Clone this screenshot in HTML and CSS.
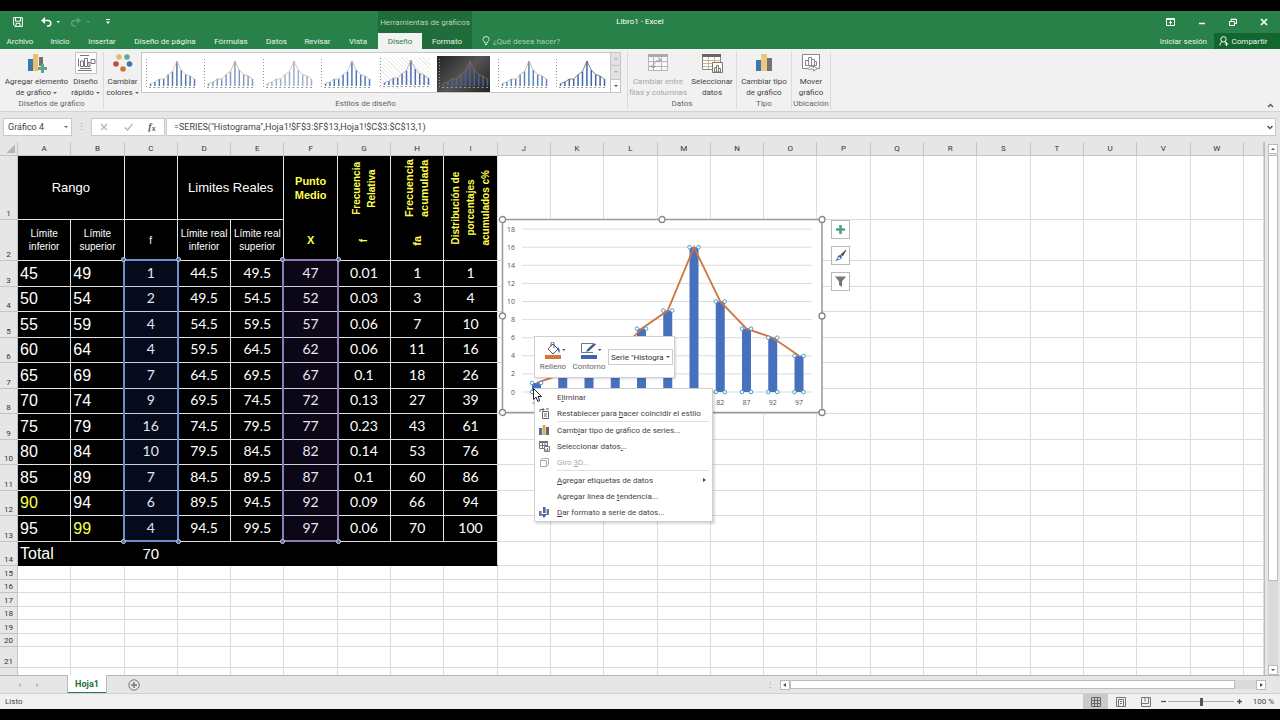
FILE: index.html
```html
<!DOCTYPE html>
<html lang="es">
<head>
<meta charset="utf-8">
<title>Libro1 - Excel</title>
<link rel="stylesheet" href="styles.css">
</head>
<body>
<header class="titlebar">
  <div class="quick">
    <button class="qbtn" aria-label="Guardar"><svg width="10" height="10" viewBox="0 0 10 10" fill="none" stroke="#fff"><path d="M.6.6h8.8v8.8H2L.6 8zM2.5.6v3.6h5V.6M3 9.4V6.3h4v3.1"/></svg></button>
    <button class="qbtn undo" aria-label="Deshacer"><svg width="20" height="10" viewBox="0 0 20 10"><path d="M2 3.5h5a2.8 2.8 0 0 1 0 5.6H6" fill="none" stroke="#fff" stroke-width="1.5"/><path d="M0 3.5 4 0v7zM15.500 4h3.500l-1.750 2z" fill="#fff"/></svg></button>
    <button class="qbtn redo" aria-label="Rehacer"><svg width="20" height="10" viewBox="0 0 20 10" opacity=".25"><path d="M7 3.500H3.500a2.800 2.800 0 0 0 0 5.600H5" fill="none" stroke="#fff" stroke-width="1.500"/><path d="M10 3.500 6 0v7zM15.500 4h3.500l-1.750 2z" fill="#fff"/></svg></button>
    <button class="qbtn custom" aria-label="Personalizar"><svg width="6" height="6" viewBox="0 0 6 6"><path d="M1 .5h4" stroke="#fff"/><path d="M1 2.500h4L3 5z" fill="#fff"/></svg></button>
  </div>
  <div class="context-title">Herramientas de gráficos</div>
  <h1 class="doc-title">Libro1 - Excel</h1>
  <div class="window-controls">
    <button aria-label="Opciones de cinta"><svg width="9" height="8" viewBox="0 0 9 8" fill="none" stroke="#fff"><path d="M.5.5h8v7h-8zM.5 1.500h8M4.500 6.500v-4M3 4.500h3"/></svg></button>
    <button aria-label="Minimizar"><svg width="8" height="8" viewBox="0 0 8 8"><path d="M1 5.500h6" stroke="#fff" stroke-width="1.500"/></svg></button>
    <button aria-label="Restaurar"><svg width="8" height="8" viewBox="0 0 8 8" fill="none" stroke="#fff"><path d="M.5 3.500h5v4h-5zM2 3.500v-2h5.500v4H5.500M2 1.200h5.500"/></svg></button>
    <button aria-label="Cerrar"><svg width="8" height="8" viewBox="0 0 8 8"><path d="m1 1 6 6M7 1 1 7" stroke="#fff" stroke-width="1.700"/></svg></button>
  </div>
</header>
<nav class="tabs">
  <button>Archivo</button><button>Inicio</button><button>Insertar</button><button>Diseño de página</button><button>Fórmulas</button><button>Datos</button><button>Revisar</button><button>Vista</button><button class="active">Diseño</button><button class="contextual">Formato</button>
  <button class="tell-me"><svg width="8" height="10" viewBox="0 0 8 10" fill="none" stroke="#cfe6d6"><path d="M2.700 7C2.700 5.500 1 5 1 3.300a3 2.800 0 0 1 6 0C7 5 5.300 5.500 5.300 7zM2.800 8.500h2.400"/></svg>¿Qué desea hacer?</button>
  <button class="signin">Iniciar sesión</button>
  <button class="share"><svg width="10" height="10" viewBox="0 0 10 10" fill="none" stroke="#fff"><circle cx="4.500" cy="3.300" r="2.700"/><path d="M.8 9.500C1 7.500 2 6.300 3.300 5.700M5.800 5.800 7 6.500M7.500 6.200v3.600M5.700 8h3.600"/></svg>Compartir</button>
</nav>

<section class="ribbon" aria-label="Cinta de opciones">
  <div class="group layouts">
    <div class="tools">
      <button class="tool add-element"><svg width="20" height="20" viewBox="0 0 20 20"><path fill="#3f76b4" d="M1 6h5v12H1z"/><path fill="#eac06e" d="M6 1h5v17H6z"/><path fill="#707070" d="M12 4h4v9h-4z"/><path fill="#5fa58c" d="M14 11h3v3h3v3h-3v3h-3v-3h-3v-3h3z"/></svg><span>Agregar elemento<br>de gráfico <i></i></span></button>
      <button class="tool quick-layout"><svg width="22" height="22" viewBox="0 0 22 22" fill="none" stroke="#777"><path fill="#fff" stroke="#c4c4c4" d="M.5.500h21v21H.5z"/><path d="M5 3.500h9M3.500 6.500v8M5 16.500h11M3 18.500h14M16 7.500h4v4h-4zM5.500 9h3v5.500h-3zM9.500 6.500h3v8h-3zM13 10.500h2v4h-2zM3 9.500h1M3 12.500h1"/></svg><span>Diseño<br>rápido <i></i></span></button>
    </div>
    <h2>Diseños de gráfico</h2>
  </div>
  <div class="group styles">
    <div class="tools">
      <button class="tool colors"><svg width="20" height="20" viewBox="0 0 20 20"><circle cx="6" cy="4" r="2.800" fill="#e2b578"/><circle cx="14" cy="4" r="2.800" fill="#6ca793"/><circle cx="3" cy="11" r="2.800" fill="#bc4f35"/><circle cx="16.500" cy="11" r="2.800" fill="#4371a8"/><circle cx="10" cy="16" r="2.800" fill="#cf7434"/></svg><span>Cambiar<br>colores <i></i></span></button>
      <div class="gallery">
        <div class="thumbs" id="thumbs"></div>
        <div class="gallery-nav"><button disabled aria-label="Subir"><i></i></button><button disabled aria-label="Bajar"><i></i></button><button aria-label="Más"><i></i></button></div>
      </div>
    </div>
    <h2>Estilos de diseño</h2>
  </div>
  <div class="group data">
    <div class="tools">
      <button class="tool swap" disabled><svg width="20" height="20" viewBox="0 0 20 20" fill="none" stroke="#b5b5b5"><path fill="#f8f8f8" d="M.5 1.500h19v16H.5z"/><path fill="#aaa" stroke="none" d="M0 1h20v3H0z"/><path d="M.5 8.500h19M.5 13.500h19M5.500 4v14M13.500 4v14"/><path stroke="#999" d="M5 14c1-5 4-7 7-7M10 4.500 13 7l-2.500 2.500M3 12l2 3 3-2"/></svg><span>Cambiar entre<br>filas y columnas</span></button>
      <button class="tool select-data"><svg width="22" height="20" viewBox="0 0 22 20" fill="none"><path fill="#fff" stroke="#888" d="M1.500 1.500h18v15h-18z"/><path fill="#666" d="M1 1h19v3H1z"/><path stroke="#c9b48c" d="M2 7.500h17M2 10.500h17M2 13.500h17M7.500 4v12M13.500 4v12"/><path fill="#fff" stroke="#777" d="M11.500 9.500h10v10h-10zM13.500 14.500h2V19h-2zM15.500 12.500h2V19h-2zM17.500 15.500h2V19h-2z"/></svg><span>Seleccionar<br>datos</span></button>
    </div>
    <h2>Datos</h2>
  </div>
  <div class="group type">
    <div class="tools">
      <button class="tool"><svg width="18" height="20" viewBox="0 0 18 20"><path fill="#3f76b4" d="M1 7h5v11H1z"/><path fill="#eac97e" d="M6 1h6v17H6z"/><path fill="#747474" d="M12 5h5v13h-5z"/></svg><span>Cambiar tipo<br>de gráfico</span></button>
    </div>
    <h2>Tipo</h2>
  </div>
  <div class="group location">
    <div class="tools">
      <button class="tool"><svg width="20" height="20" viewBox="0 0 20 20" fill="none" stroke="#888"><path fill="#fff" d="M1.500 1.500h17v14h-17z"/><path d="M4.500 7.500h3v5h-3zM7.500 4.500h3v8h-3zM10.500 6.500h3v6h-3zM13.500 8.500h2v4h-2z"/><path fill="#fff" d="M7 15.500c2-3 4-2.500 5.500-1V13l4 2.500-4 2.500v-1.500C10 15 9 18 7 15.500z"/></svg><span>Mover<br>gráfico</span></button>
    </div>
    <h2>Ubicación</h2>
  </div>
  <button class="collapse" aria-label="Contraer cinta"><svg width="7" height="5" viewBox="0 0 7 5"><path d="m1 4 2.500-2.500L6 4" fill="none" stroke="#555" stroke-width="1.300"/></svg></button>
</section>

<section class="formula-bar">
  <div class="name-box"><input aria-label="Cuadro de nombres" value="Gráfico 4"><button aria-label="Nombres"><i></i></button></div>
  <span class="grip">⋮</span>
  <div class="fx-buttons">
    <button aria-label="Cancelar"><svg width="8" height="8" viewBox="0 0 8 8"><path d="m1 1 6 6M7 1 1 7" stroke="#b4b4b4" stroke-width="1.200"/></svg></button>
    <button aria-label="Introducir"><svg width="9" height="8" viewBox="0 0 9 8"><path d="m1 4.500 2.500 2.500L8.500 1" fill="none" stroke="#b4b4b4" stroke-width="1.300"/></svg></button>
    <button class="fx">f<small>x</small></button>
  </div>
  <div class="formula"><input aria-label="Barra de fórmulas" value='=SERIES("Histograma",Hoja1!$F$3:$F$13,Hoja1!$C$3:$C$13,1)'><button aria-label="Expandir"><svg width="6" height="5" viewBox="0 0 6 5"><path d="m.5 1 2.500 2.500L5.500 1" fill="none" stroke="#555" stroke-width="1.500"/></svg></button></div>
</section>

<main class="sheet">
  <div class="grid-area">
    <table class="grid" id="grid"></table>
    <div class="chart" id="chart"></div>
    <div class="chart-tools">
      <button aria-label="Elementos de gráfico"><svg width="11" height="11" viewBox="0 0 11 11"><path d="M5.500 1v9M1 5.500h9" stroke="#4da183" stroke-width="2.600"/></svg></button>
      <button aria-label="Estilos de gráfico"><svg width="13" height="13" viewBox="0 0 13 13"><path d="M12 1 7 5.500l1.500 1.500z" fill="#555" stroke="#555"/><path d="M6.500 6 8 7.500C7.500 10.500 5 11.500 1 11.500c2-.8 2-2 2.500-3.500S5.500 6 6.500 6z" fill="#40689b"/><circle cx="5" cy="9.300" r="1.200" fill="#dfe9f4"/></svg></button>
      <button aria-label="Filtros de gráfico"><svg width="13" height="13" viewBox="0 0 13 13"><path d="M1 1.500h11L8 6.500V12L5 10V6.500z" fill="#777"/></svg></button>
    </div>
    <div class="mini-toolbar">
      <button class="mini"><svg width="22" height="18" viewBox="0 0 22 18"><path fill="#d5753a" d="M1 13h16v4H1z"/><path d="m4 7 5-5 5 5-5 5zM7 4V1.500a1.500 1.500 0 0 1 3 0V6" fill="#fff" stroke="#555"/><path d="M13.500 5.500c2 0 2.500 2 2 5.500-1.500-1-2-3-2-5.500z" fill="#3a69a8"/><path d="M18 7h3.500L19.700 9z" fill="#555"/></svg>Relleno</button>
      <button class="mini"><svg width="22" height="18" viewBox="0 0 22 18"><path fill="#3d66ae" d="M1 13h16v4H1z"/><path d="M13 1.500H1.500v9H13" fill="none" stroke="#777"/><path d="m6 10 1.500-3L14 1l2 1.500-7 6.500z" fill="#40618f"/><path d="M18 7h3.500L19.700 9z" fill="#555"/></svg>Contorno</button>
      <span class="series-select"><select aria-label="Elemento de gráfico"><option>Serie "Histogra</option></select></span>
    </div>
    <div class="context-menu" role="menu">
      <button role="menuitem"><span class="ico"></span><span>E<u>l</u>iminar</span></button>
      <button role="menuitem"><span class="ico"><svg width="11" height="11" viewBox="0 0 11 11" fill="none" stroke="#666"><path d="M3.500 3.500h6v7h-6zM5 6h3M5 8h3M1 4V1.500h4M3.500 0 5 1.500 3.500 3M7 1h3"/></svg></span><span>Restablecer para <u>h</u>acer coincidir el estilo</span></button>
      <hr>
      <button role="menuitem"><span class="ico"><svg width="10" height="10" viewBox="0 0 10 10"><path fill="#3f76b4" d="M0 3h3v7H0z"/><path fill="#d9a94f" d="M3.500 0h3v10h-3z"/><path fill="#666" d="M7 2h3v8H7z"/></svg></span><span>Camb<u>i</u>ar tipo de gráfico de series...</span></button>
      <button role="menuitem"><span class="ico"><svg width="11" height="11" viewBox="0 0 11 11" fill="none" stroke="#777"><path fill="#666" stroke="none" d="M0 0h9v2H0z"/><path d="M.5.500h8v7h-8zM.5 4.500h8M3.500 1v6M6 1v6"/><path fill="#fff" d="M5.500 5.500h5v5h-5zM7 10V8M8.500 10V7"/></svg></span><span>Seleccionar datos<u>.</u>..</span></button>
      <button role="menuitem" disabled><span class="ico"><svg width="9" height="9" viewBox="0 0 9 9" fill="none" stroke="#aaa"><path d="M.5 2.500h6v6h-6zM.5 2.500l1.500-2h6.500v6L6.500 8.500"/></svg></span><span>Giro <u>3</u>D...</span></button>
      <hr class="spaced">
      <button role="menuitem"><span class="ico"></span><span><u>A</u>gregar etiquetas de datos</span><i class="submenu"></i></button>
      <button role="menuitem"><span class="ico"></span><span>Agregar línea de <u>t</u>endencia...</span></button>
      <button role="menuitem"><span class="ico"><svg width="10" height="11" viewBox="0 0 10 11"><path fill="#777" d="M0 4h2.500v5H0zM7.500 2H10v6H7.500z"/><path fill="#3a69a8" d="M4 0h2.500v6H4zM2 7h6L5 11z"/></svg></span><span><u>D</u>ar formato a serie de datos...</span></button>
    </div>
    <svg class="cursor" width="9" height="15" viewBox="0 0 9 15"><path d="M.5.500v11l2.500-2.300 1.800 4.300 1.900-.8L5 8.500h3.500z" fill="#fff" stroke="#222"/></svg>
  </div>
  <div class="vscroll"><button aria-label="Subir"><i></i></button><div class="thumb"></div><div class="track"></div><button aria-label="Bajar"><i></i></button></div>
</main>

<section class="sheet-tabs">
  <div class="tab-nav"><button aria-label="Hoja anterior"><i></i></button><button aria-label="Hoja siguiente"><i></i></button></div>
  <button class="sheet-tab">Hoja1</button>
  <button class="new-sheet" aria-label="Hoja nueva"><svg width="12" height="12" viewBox="0 0 12 12" fill="none" stroke="#777"><circle cx="6" cy="6" r="5.200"/><path d="M6 3v6M3 6h6" stroke-width="1.500"/></svg></button>
  <span class="grip">⋮</span>
  <div class="hscroll"><button aria-label="Izquierda"><i></i></button><div class="thumb"></div><div class="track"></div><button aria-label="Derecha"><i></i></button></div>
</section>

<footer class="status">
  <span class="ready">Listo</span>
  <button class="view on" aria-label="Normal"><svg width="10" height="10" viewBox="0 0 10 10" fill="none" stroke="#666"><path d="M.5.500h9v9h-9zM.5 3.500h9M.5 6.500h9M3.500.500v9M6.500.500v9"/></svg></button>
  <button class="view" aria-label="Diseño de página"><svg width="10" height="10" viewBox="0 0 10 10" fill="none" stroke="#777"><path d="M.5.500h9v9h-9zM2.500 2.500h5v7h-5zM4 4.500h2M4 6.500h2"/></svg></button>
  <button class="view" aria-label="Salto de página"><svg width="10" height="10" viewBox="0 0 10 10" fill="none" stroke="#777"><path d="M.5.500h9v9h-9zM.5 6.500h7V.5M4 .5v4"/></svg></button>
  <button class="step" aria-label="Alejar"><svg width="5" height="5" viewBox="0 0 5 5"><path d="M0 2.500h5" stroke="#555" stroke-width="1.300"/></svg></button>
  <input type="range" aria-label="Zoom" min="0" max="100" value="50">
  <button class="step" aria-label="Acercar"><svg width="5" height="5" viewBox="0 0 5 5"><path d="M0 2.500h5M2.500 0v5" stroke="#555" stroke-width="1.300"/></svg></button>
  <span class="zoom">100 %</span>
</footer>
<script src="script.js"></script>
</body>
</html>
```
FILE: styles.css
```css
* { box-sizing: border-box; }
body {
  margin: 0;
  min-height: 100vh;
  padding: 11px 0;
  display: flex;
  flex-direction: column;
  background: #000;
  color: #444;
  font: 8px/11px Roboto, "Open Sans", sans-serif;
}
button, input, select { font: inherit; color: inherit; margin: 0; padding: 0; border: 0; background: none; }
button { display: flex; align-items: center; justify-content: center; white-space: nowrap; }
h1, h2 { margin: 0; font: inherit; }
svg { flex: none; display: block; }

/* title bar */
.titlebar { position: relative; display: flex; height: 22px; background: #288148; color: #fff; }
.quick { width: 378px; display: flex; align-items: center; gap: 18px; padding-left: 13px; }
.redo { margin-left: -8px; }
.custom { margin-left: -4px; }
.context-title { width: 94px; background: #206d3b; color: #b4d6bf; display: flex; align-items: center; justify-content: center; white-space: nowrap; }
.doc-title { position: absolute; inset: 0; line-height: 22px; text-align: center; pointer-events: none; }
.window-controls { margin-left: auto; display: flex; padding-right: 1px; }
.window-controls button { width: 31px; }

.tabs {
  display: grid;
  grid-template-columns: 40px 40px 44px 82px 50px 41px 41px 40px 44px 50px 1fr auto 66px;
  height: 16px;
  background: #288148;
  color: #e9f5ec;
}
.tabs .active { background: #f2f2f2; color: #288148; }
.tabs .contextual { background: #206d3b; }
.tell-me { justify-content: flex-start; gap: 3px; padding-left: 10px; color: #a9d0b6; }
.signin { padding-right: 7px; }
.share { background: #14662f; gap: 3px; padding-right: 8px; }

/* ribbon */
.ribbon { display: flex; height: 63px; padding-top: 3px; background: #f1f1f1; border-bottom: 1px solid #d2d2d2; }
.group { display: flex; flex-direction: column; justify-content: space-between; border-right: 1px solid #dadada; margin-bottom: 2px; }
.group h2 { text-align: center; line-height: 10px; color: #666; }
.tools { display: flex; justify-content: center; }
.tool { flex-direction: column; width: 52px; line-height: 11px; }
.tool svg { height: 22px; margin-bottom: 2px; }
.tool:disabled { color: #a6a6a6; }
.tool i, .name-box i { display: inline-block; border: 2px solid transparent; border-top-color: #666; border-bottom: 0; vertical-align: middle; }
.add-element { width: 68px; }
.quick-layout { width: 30px; }
.layouts { width: 104px; }
.styles { width: 524px; }
.styles .tools { justify-content: flex-start; }
.colors { width: 37px; }
.data { width: 109px; }
.swap { width: 60px; }
.select-data { width: 48px; }
.type { width: 55px; }
.location { width: 39px; }
.location .tool { width: 38px; }
.gallery { flex: 1; display: flex; height: 41px; margin-right: 6px; background: #fff; border: 1px solid #c6c6c6; }
.thumbs { flex: 1; display: grid; grid-template-columns: repeat(8, 1fr); }
.thumbs .dark { background: linear-gradient(135deg, #222, #555, #222); margin: 3px 3px 3px 2px; }
.thumbs .hatch { background: repeating-linear-gradient(45deg, #fff 0 2px, #ececec 2px 3px); margin: 4px 4px 6px; }
.gallery-nav { width: 10px; display: grid; border-left: 1px solid #c6c6c6; }
.gallery-nav button { background: #e2e2e2; border-bottom: 1px solid #c6c6c6; }
.gallery-nav button:last-child { background: #fff; border: 0; }
.gallery-nav i { border: 2px solid transparent; border-top-color: #555; border-bottom: 0; }
.gallery-nav button:disabled i { border-top-color: #aaa; }
.collapse { margin: auto 6px 3px auto; }

/* formula bar */
.formula-bar { display: flex; height: 30px; padding: 6px 4px 6px 3px; background: #e6e6e6; font-size: 9px; }
.name-box, .fx-buttons, .formula { display: flex; background: #fff; border: 1px solid #c9c9c9; }
.name-box { width: 69px; padding-left: 4px; }
.name-box input { width: 52px; }
.name-box button { flex: 1; }
.grip { width: 19px; text-align: center; line-height: 18px; color: #999; }
.fx-buttons { width: 74px; }
.fx-buttons button { flex: 1; }
.fx { font: italic bold 10px/12px "Liberation Serif", serif; color: #555; }
.fx small { font-size: 8px; align-self: end; }
.formula { flex: 1; margin-left: 1px; padding: 0 2px 0 7px; }
.formula input { flex: 1; }

/* sheet */
.sheet { flex: 1; display: flex; min-height: 0; background: #e6e6e6; overflow: hidden; }
.grid-area { flex: 1; position: relative; overflow: hidden; border-right: 1px solid #bbb; }
.grid { width: 100%; table-layout: fixed; border-collapse: separate; border-spacing: 0; background: #fff; }
.grid .first { width: 18px; }
.grid .last { width: 20px; }
.grid th, .grid td { padding: 0; overflow: visible; }
.grid thead tr { height: 14px; }
.grid th { background: #e6e6e6; font-weight: 400; font-size: 8px; line-height: 11px; color: #333; border: 0 solid #c4c4c4; }
.grid thead th { border-width: 0 1px 1px 0; }
.grid tbody th { border-width: 0 1px 1px 0; vertical-align: bottom; }
.corner::after { content: ""; display: block; margin: 0 2px 0 auto; width: 8px; height: 8px; background: linear-gradient(135deg, transparent 50%, #b5b5b5 50%); }
.grid td { border: 0 solid #dcdcdc; border-width: 0 1px 1px 0; }
.h64 { height: 64px; } .h41 { height: 41px; } .h26 { height: 26px; } .h25 { height: 25px; } .h24 { height: 24px; }
.h21 { height: 21px; } .h14 { height: 14px; } .h13 { height: 13px; } .h7 { height: 7px; }
.h7 th, .h7 td { border-bottom: 0; }
.grid .k { background: #000; color: #fff; border-color: #e4e4e4; text-align: center; }
.grid .head { font: 13px/16px "Liberation Sans", sans-serif; }
.grid .sub { font: 10px/13px "Liberation Sans", sans-serif; }
.grid .lim { font: 16px/20px "Liberation Sans", sans-serif; text-align: left; padding-left: 2px; }
.grid .num { font: 14px/20px Lato, sans-serif; padding-bottom: 2px; }
.grid .yellow { color: #ffff4d; }
.grid .mid { font: bold 11px/14px "Liberation Sans", sans-serif; color: #ffff4d; }
.grid .open { border-bottom-width: 0; }
.grid .total { font: 15px/20px "Liberation Sans", sans-serif; border-color: #000; }
.grid .total.lim { font-size: 16px; }
.grid .edge { border-right-color: #dcdcdc; }
.vert { display: inline-block; writing-mode: vertical-rl; transform: rotate(180deg); vertical-align: middle; line-height: 15px; white-space: nowrap; }
.vert.small { font-size: 10px; }
.grid .range-start { position: relative; }
.range { position: absolute; left: -2px; top: -2px; right: -2px; height: 283px; border: 2px solid #6f8ed0; background: rgba(40, 80, 190, .14); }
.range.purple { border-color: #8c7bb4; background: rgba(90, 60, 190, .12); }
.range b { position: absolute; width: 5px; height: 5px; border: 1px solid #c9d3ea; border-radius: 50%; background: #58699c; }
.range b:nth-child(1) { left: -4px; top: -4px; }
.range b:nth-child(2) { right: -4px; top: -4px; }
.range b:nth-child(3) { left: -4px; bottom: -4px; }
.range b:nth-child(4) { right: -4px; bottom: -4px; }

/* floating objects over the cells */
.chart { position: absolute; left: 497px; top: 72px; }
.chart text { font: 7px "Open Sans", "Noto Sans", sans-serif; fill: #555; }
.chart-tools { position: absolute; left: 831px; top: 78px; display: grid; gap: 7px; }
.chart-tools button { width: 19px; height: 19px; background: #fff; border: 1px solid #b9b9b9; }
.mini-toolbar { position: absolute; left: 534px; top: 194px; width: 141px; height: 42px; display: flex; background: #fff; border: 1px solid #d0d0d0; box-shadow: 1px 1px 2px rgba(0, 0, 0, .15); }
.mini { flex-direction: column; width: 36px; gap: 1px; color: #666; }
.mini svg { margin-left: 4px; }
.series-select { position: relative; width: 65px; height: 16px; margin: 12px 0 0 1px; }
.series-select select { appearance: none; width: 100%; height: 100%; padding-left: 2px; border: 1px solid #ccc; color: #333; }
.series-select::after { content: ""; position: absolute; right: 3px; top: 7px; border: 2px solid transparent; border-top-color: #555; border-bottom: 0; }
.context-menu { position: absolute; left: 534px; top: 246px; width: 179px; padding: 0 0 1px; background: #fff; border: 1px solid #cfcfcf; box-shadow: 2px 2px 2px rgba(0, 0, 0, .15); }
.context-menu button { width: 100%; height: 16px; justify-content: flex-start; }
.context-menu button:disabled { color: #aaa; }
.context-menu hr { height: 1px; margin: 0 3px 0 22px; border: 0; background: #e1e1e1; }
.context-menu .spaced { margin-bottom: 1px; }
.ico { width: 22px; display: flex; justify-content: center; padding-right: 4px; }
.submenu { margin: 0 6px 0 auto; border: 2px solid transparent; border-left: 3px solid #444; border-right: 0; }
.cursor { position: absolute; left: 533px; top: 246px; }

.vscroll { width: 15px; padding: 2px 2px 0 3px; display: flex; flex-direction: column; }
.vscroll button, .hscroll button { width: 10px; height: 10px; background: #fff; border: 1px solid #bbb; }
.vscroll .thumb { flex: 426; margin-top: 1px; background: #fff; border: 1px solid #bbb; }
.vscroll .track { flex: 85; background: #dadada; }
.vscroll i { border: 2px solid transparent; border-bottom: 2px solid #555; border-top: 0; }
.vscroll button:last-child i { transform: rotate(180deg); }

.sheet-tabs { display: flex; height: 19px; background: #e6e6e6; border-top: 1px solid #b5b5b5; border-bottom: 1px solid #d0d0d0; }
.tab-nav { width: 67px; display: flex; align-items: center; padding-left: 18px; gap: 15px; }
.tab-nav i { border: 2px solid transparent; border-right: 3px solid #bbb; border-left: 0; }
.tab-nav button:last-child i { transform: rotate(180deg); }
.sheet-tab { width: 40px; height: 18px; margin-top: -1px; background: #fff; border: solid #bbb; border-width: 0 1px; box-shadow: inset 0 -1px #288148; color: #20703c; font-size: 9px; font-weight: 700; }
.new-sheet { margin-left: 21px; }
.sheet-tabs .grip { margin-left: auto; font-size: 8px; }
.hscroll { width: 38%; padding: 4px 0; display: flex; margin-right: 14px; }
.hscroll .thumb { flex: 446; background: #fff; border: 1px solid #bbb; }
.hscroll .track { flex: 21; background: #dadada; }
.hscroll i { border: 2px solid transparent; border-right: 3px solid #555; border-left: 0; }
.hscroll button:last-child i { transform: rotate(180deg); }

.status { display: flex; align-items: center; height: 15px; background: #f1f1f1; padding-right: 6px; }
.ready { margin: 0 auto 0 5px; }
.view { width: 25px; height: 15px; }
.view.on { background: #cacaca; }
.step { width: 10px; }
.status input { appearance: none; width: 66px; height: 15px; background: linear-gradient(#aaa, #aaa) no-repeat center / 100% 1px; }
.status input::-webkit-slider-thumb { appearance: none; width: 3px; height: 8px; background: #555; }
.zoom { width: 30px; text-align: right; }
```
FILE: script.js
```js
const freq = [1, 2, 4, 4, 7, 9, 16, 10, 7, 6, 4];
const rel = ["0.01", "0.03", "0.06", "0.06", "0.1", "0.13", "0.23", "0.14", "0.1", "0.09", "0.06"];
const cum = [1, 3, 7, 11, 18, 27, 43, 53, 60, 66, 70];
const pct = [1, 4, 10, 16, 26, 39, 61, 76, 86, 94, 100];
const empty = n => "<td></td>".repeat(n);
const td = (cls, text, attrs = "") => `<td class="k ${cls}" ${attrs}>${text}</td>`;
const vert = (text, cls = "") => `<span class="vert ${cls}">${text}</span>`;
const row = (n, h, cells) => `<tr class="h${h}"><th>${n}</th>${cells}</tr>`;

/* worksheet */
let html = '<thead><tr><th class="first corner"></th>';
for (const c of "ABCDEFGHIJKLMNOPQRSTUVW") html += `<th>${c}</th>`;
html += '<th class="last"></th></tr></thead><tbody>';
html += row(1, 64,
  td("head", "Rango", 'colspan="2"') + td("", "") + td("head", "Limites Reales", 'colspan="2"') +
  td("mid open", "Punto<br>Medio") + td("mid open", vert("Frecuencia<br>Relativa", "small")) +
  td("mid open", vert("Frecuencia<br>acumulada")) +
  td("mid edge", vert("Distribución de<br>porcentajes<br>acumulados c%", "small"), 'rowspan="2"') + empty(15));
html += row(2, 41,
  td("sub", "Límite<br>inferior") + td("sub", "Límite<br>superior") + td("sub", "f") +
  td("sub", "Límite real<br>inferior") + td("sub", "Límite real<br>superior") +
  td("mid", "X") + td("mid", vert("f", "small")) + td("mid", vert("fa")) + empty(15));
const corners = "<b></b><b></b><b></b><b></b>";
freq.forEach((f, i) => {
  const lo = 45 + 5 * i, hi = lo + 4, start = i === 0;
  html += row(i + 3, i % 2 ? 25 : 26,
    td("lim" + (lo === 90 ? " yellow" : ""), lo) + td("lim" + (hi === 99 ? " yellow" : ""), hi) +
    td("num" + (start ? " range-start" : ""), f + (start ? `<div class="range">${corners}</div>` : "")) +
    td("num", (lo - .5).toFixed(1)) + td("num", (hi + .5).toFixed(1)) +
    td("num" + (start ? " range-start" : ""), (lo + 2) + (start ? `<div class="range purple">${corners}</div>` : "")) +
    td("num", rel[i]) + td("num", cum[i]) + td("num edge", pct[i]) + empty(15));
});
html += row(14, 24, td("total lim", "Total") + td("total", "") + td("total", "70") +
  td("total", "").repeat(5) + td("total edge", "") + empty(15));
for (let n = 15; n <= 20; n++) html += row(n, n % 2 ? 14 : 13, empty(24));
html += row(21, 21, empty(24)) + row("", 7, empty(24)) + "</tbody>";
document.getElementById("grid").innerHTML = html;

/* chart */
const X = i => 38.5 + 26.25 * i, Y = v => 177 - 9.05 * v;
let s = '<svg width="332" height="204" viewBox="-1 -1 332 204"><rect x="4.500" y="4.500" width="319.500" height="193" fill="#fff" stroke="#999" stroke-width="1.500"/>';
for (let v = 0; v <= 18; v += 2)
  s += `<path d="M24 ${Y(v)}H314" stroke="#dcdcdc"/><text x="17" y="${Y(v) + 2.5}" text-anchor="end">${v}</text>`;
freq.forEach((f, i) => {
  s += `<rect x="${X(i) - 4.5}" y="${Y(f)}" width="9" height="${177 - Y(f)}" fill="#4770bd"/>` +
    `<text x="${X(i)}" y="190" text-anchor="middle">${i ? 47 + 5 * i : 47}</text>`;
});
s += `<polyline points="${freq.map((f, i) => X(i) + "," + Y(f)).join(" ")}" fill="none" stroke="#cf7440" stroke-width="1.800"/>`;
freq.forEach((f, i) => {
  for (const x of [X(i) - 4.5, X(i) + 4.5]) for (const y of [Y(f), 177])
    s += `<circle cx="${x}" cy="${y}" r="1.800" fill="#fff" stroke="#4a9ad0"/>`;
});
for (const [x, y] of [[4.5, 4.5], [164, 4.5], [324, 4.5], [4.5, 101], [324, 101], [4.5, 197.5], [164, 197.5], [324, 197.5]])
  s += `<circle cx="${x}" cy="${y}" r="3" fill="#fff" stroke="#888" stroke-width="1.300"/>`;
document.getElementById("chart").innerHTML = s + "</svg>";

/* style gallery */
const looks = [
  { bar: "#5578ad", line: "#c9bdb5" }, { bar: "#7f9ac4", line: "#cda98f" }, { bar: "#9db0d0", line: "#d3bda9" },
  { bar: "#4f79b8", line: "#c3b5b5" }, { bar: "#4e6fae", line: "#b5a9b5", cls: "hatch" },
  { bar: "#4665a0", line: "#9a6544", cls: "dark" }, { bar: "#5b81ba", line: "#b4ab9c" }, { bar: "#3f66ab", line: "#6c6470" }
];
document.getElementById("thumbs").innerHTML = looks.map((k, n) => {
  const x = i => 5.5 + 4.4 * i, y = v => 27 - 1.5 * v;
  let g = `<svg width="52" height="32" viewBox="0 0 52 32"><path d="M1.500 1v28" stroke="#999" stroke-dasharray="1 2"/><path d="M4 29.500h47" stroke="#999" stroke-dasharray="2 2.400"/>`;
  freq.forEach((f, i) => { g += `<path d="M${x(i)} ${y(f)}V28" stroke="${k.bar}" stroke-width="1.500"/>`; });
  g += `<polyline points="${freq.map((f, i) => x(i) + "," + y(f)).join(" ")}" fill="none" stroke="${k.line}" stroke-width=".8"/></svg>`;
  return `<button class="${k.cls || ""}" aria-label="Estilo ${n + 1}">${g}</button>`;
}).join("");
```
